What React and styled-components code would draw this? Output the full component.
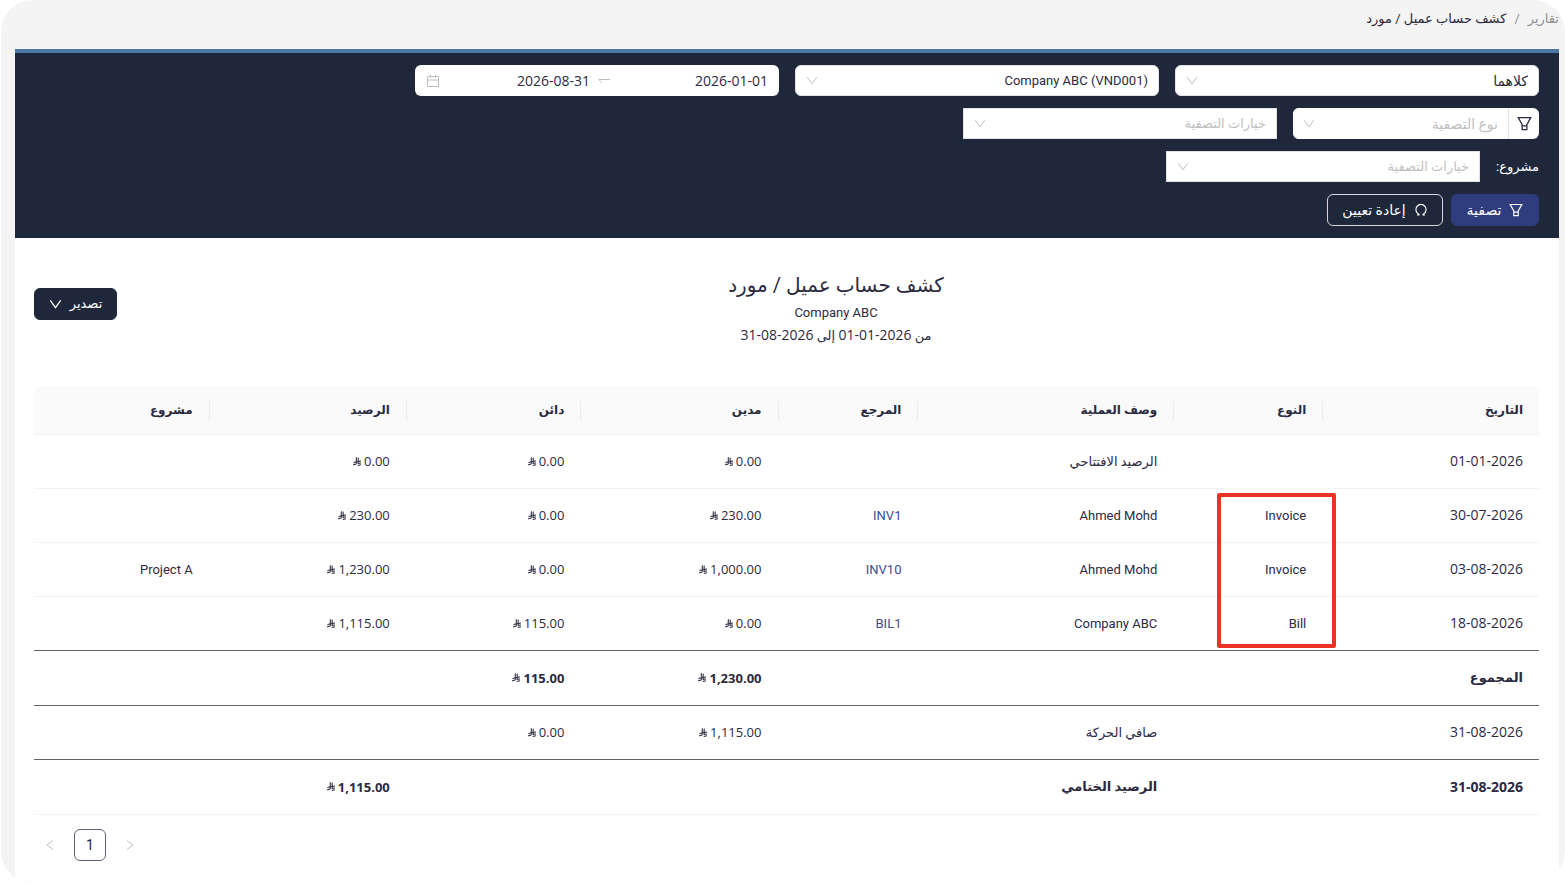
import React from 'react';
import styled, { createGlobalStyle } from 'styled-components';

const ink = '#2c2a3f';
const navy = '#1e283a';
const muted = '#bfbfbf';

const GlobalStyle = createGlobalStyle`
  *, *::before, *::after { box-sizing: border-box; }
  body { margin: 0; background: #fff; }
  body, button, input, select {
    font-family: Roboto, 'DejaVu Sans', sans-serif;
    font-size: 14px;
    line-height: 22px;
    color: ${ink};
  }
`;

const Frame = styled.div`
  min-height: 100vh;
  margin-left: 1px;
  padding: 8px 6px 0 14px;
  background: #f4f4f4;
  border-radius: 32px;
  overflow: hidden;
`;

const Breadcrumb = styled.nav`
  display: flex;
  gap: 8px;
  height: 41px;
  font-size: 13px;
  color: #8f8f95;
  a { color: inherit; text-decoration: none; }
`;

const Current = styled.span`
  color: ${ink};
`;

const Card = styled.main`
  min-height: calc(100vh - 49px);
  background: #fff;
`;

const FilterPanel = styled.form`
  display: flex;
  flex-direction: column;
  gap: 12px;
  padding: 12px 20px;
  background: ${navy};
  border-top: 4px solid #4a78a3;
`;

const FilterGrid = styled.div`
  display: grid;
  grid-template-columns: repeat(4, minmax(0, 1fr));
  gap: 16px;
`;

const FilterRow = styled.div`
  display: flex;
  align-items: center;
  gap: ${(p) => p.$gap || 16}px;
`;

const SelectBox = styled.div`
  display: flex;
  align-items: center;
  position: relative;
  flex: ${(p) => (p.$width ? `0 1 ${p.$width}px` : '1 1 auto')};
  height: 31px;
  background: #fff;
  border: 1px solid #e3e3e6;
  border-radius: ${(p) => (p.$square ? 0 : 6)}px;
  svg { position: absolute; left: 10px; color: ${muted}; pointer-events: none; }
`;

const NativeSelect = styled.select`
  appearance: none;
  width: 100%;
  height: 100%;
  padding: 0 10px 0 30px;
  border: 0;
  background: transparent;
  font-size: ${(p) => (p.$compact ? 13 : 14)}px;
  color: ${(p) => (p.$empty ? muted : ink)};
`;

const FilterTypeGroup = styled.div`
  display: flex;
  flex: 0 1 246px;
  background: #fff;
  border-radius: 6px;
  overflow: hidden;
  ${SelectBox} { border-width: 0 1px 0 0; border-radius: 0; }
`;

const Addon = styled.span`
  display: flex;
  align-items: center;
  justify-content: center;
  flex: 0 0 30px;
`;

const DateRange = styled.div`
  display: flex;
  align-items: center;
  height: 31px;
  padding: 0 11px;
  background: #fff;
  border-radius: 6px;
  color: ${muted};
`;

const RangeArrow = styled.span`
  display: flex;
  padding: 0 8px;
`;

const DateInput = styled.input`
  flex: 1 1 0;
  min-width: 0;
  padding: 0;
  border: 0;
  background: transparent;
  font-family: 'Open Sans', sans-serif;
  text-align: right;
  outline: none;
`;

const DateText = styled.bdi`
  font-family: 'Open Sans', sans-serif;
  font-size: 14px;
`;

const FieldLabel = styled.label`
  flex: 0 0 42px;
  white-space: nowrap;
  font-size: 13px;
  color: #fff;
`;

const Button = styled.button`
  display: inline-flex;
  align-items: center;
  justify-content: center;
  gap: 8px;
  min-width: ${(p) => p.$width}px;
  height: 32px;
  padding: 0 10px;
  white-space: nowrap;
  font-size: ${(p) => (p.$compact ? 13 : 14)}px;
  color: #fff;
  background: ${(p) => p.$fill || 'transparent'};
  border: 1px solid ${(p) => p.$line || p.$fill};
  border-radius: 6px;
  cursor: pointer;
`;

const Report = styled.section`
  padding: 33px 20px 16px 19px;
`;

const ReportHead = styled.header`
  display: flex;
  align-items: flex-start;
  gap: 16px;
  margin-bottom: 39px;
  ${Button} { margin-top: 17px; }
`;

const Heading = styled.div`
  flex: 1;
  display: flex;
  flex-direction: column;
  text-align: center;
  h1 { margin: 0 0 3px; font-size: 20px; line-height: 28px; font-weight: 400; }
  p { margin: 0; font-size: 13px; line-height: 22px; }
`;

const Ledger = styled.table`
  width: 100%;
  table-layout: fixed;
  border-collapse: separate;
  border-spacing: 0;
`;

const HeadCell = styled.th`
  position: relative;
  width: ${(p) => p.$width}%;
  height: 49px;
  padding: 0 16px;
  text-align: right;
  font-size: 12px;
  font-weight: 700;
  background: #fafafa;
  border-bottom: 1px solid #f2f2f2;
  &:first-child { border-top-right-radius: 8px; }
  &:last-child { border-top-left-radius: 8px; }
  &:not(:last-child)::after {
    content: '';
    position: absolute;
    left: 0;
    top: 15px;
    width: 1px;
    height: 20px;
    background: #ececec;
  }
`;

const Cell = styled.td`
  position: relative;
  padding: 0 16px;
  text-align: right;
  font-size: 13px;
  a { color: #3d4d8a; text-decoration: none; }
`;

const Row = styled.tr`
  height: ${(p) => (p.$bold ? 55 : 54)}px;
  font-weight: ${(p) => (p.$bold ? 700 : 400)};
  ${Cell} { border-bottom: 1px solid ${(p) => (p.$ruled ? '#63636b' : '#f2f2f2')}; }
`;

const Highlight = styled.div`
  position: absolute;
  top: 4px;
  left: 44px;
  right: -14px;
  height: 155px;
  border: 4px solid #ea3323;
  border-radius: 2px;
  pointer-events: none;
  z-index: 1;
`;

const Money = styled.span`
  display: inline-flex;
  align-items: center;
  gap: 3px;
  direction: ltr;
  font-family: 'Open Sans', sans-serif;
`;

const Pager = styled.nav`
  display: flex;
  direction: ltr;
  gap: 8px;
  margin-top: 14px;
`;

const PageButton = styled.button`
  display: flex;
  align-items: center;
  justify-content: center;
  width: 32px;
  height: 32px;
  padding: 0;
  background: transparent;
  color: ${(p) => (p.$active ? navy : muted)};
  border: 1px solid ${(p) => (p.$active ? '#5b6371' : 'transparent')};
  border-radius: 6px;
`;

const Stroke = ({ size = 12, children, box = 12, width = 1 }) => (
  <svg width={size} height={size} viewBox={`0 0 ${box} ${box}`} fill="none" stroke="currentColor" strokeWidth={width} aria-hidden="true">
    {children}
  </svg>
);

const Chevron = ({ width, size }) => <Stroke width={width} size={size}><path d="M1.2 2.2 6 8.8l4.8-6.6" /></Stroke>;
const Funnel = ({ size = 14 }) => (
  <Stroke size={size} box={14} width={1.2}>
    <path d="M1.2 1.5h11.6L9.2 8v4.7H4.8V8zM4.8 9.2h4.4" />
  </Stroke>
);
const Reload = () => (
  <Stroke size={14} box={14} width={1.2}>
    <path d="M3 12h1.9v-.8A5.1 5.1 0 1 1 9.1 11.2V12H11" />
  </Stroke>
);
const Calendar = () => (
  <Stroke size={14} box={14}>
    <path d="M1.5 2.5h11v10h-11zM1.5 6h11M4.5 .8v3M9.5 .8v3" />
  </Stroke>
);
const Swap = () => (
  <Stroke size={12}><path d="M12 4.5H.8l3 3.5" /></Stroke>
);
const Riyal = () => (
  <svg width="8" height="9" viewBox="0 0 1124.14 1256.39" fill="currentColor" stroke="currentColor" strokeWidth="20" role="img" aria-label="SAR">
    <path d="M699.62,1113.02h0c-20.06,44.48-33.32,92.75-38.4,143.37l424.51-90.24c20.06-44.47,33.31-92.75,38.4-143.37l-424.51,90.24Z" />
    <path d="M1085.73,895.8c20.06-44.47,33.32-92.75,38.4-143.37l-330.68,70.33v-135.2l292.27-62.11c20.06-44.47,33.32-92.75,38.4-143.37l-330.68,70.27V66.13c-50.67,28.45-95.67,66.32-132.25,110.99v403.35l-132.25,28.11V0c-50.67,28.44-95.67,66.32-132.25,110.99v525.69l-295.91,62.88c-20.06,44.47-33.33,92.75-38.42,143.37l334.33-71.05v170.26l-358.3,76.14c-20.06,44.47-33.32,92.75-38.4,143.37l375.04-79.7c30.53-6.35,56.77-24.4,73.83-49.24l68.78-101.97v-.02c7.14-10.55,11.3-23.27,11.3-36.97v-149.98l132.25-28.11v270.4l424.53-90.28Z" />
  </svg>
);

const Picker = ({ text, id, empty, compact, ...box }) => (
  <SelectBox {...box}>
    <NativeSelect id={id} aria-label={id ? undefined : text} $empty={empty} $compact={compact}>
      <option>{text}</option>
    </NativeSelect>
    <Chevron />
  </SelectBox>
);

const columns = [
  ['التاريخ', 14.4], ['النوع', 9.9], ['وصف العملية', 17], ['المرجع', 9.3],
  ['مدين', 13.1], ['دائن', 11.6], ['الرصيد', 13.1], ['مشروع', 11.6],
];

const rows = [
  { date: '01-01-2026', text: 'الرصيد الافتتاحي', debit: '0.00', credit: '0.00', balance: '0.00' },
  { date: '30-07-2026', type: 'Invoice', text: 'Ahmed Mohd', ref: 'INV1', debit: '230.00', credit: '0.00', balance: '230.00', marked: true },
  { date: '03-08-2026', type: 'Invoice', text: 'Ahmed Mohd', ref: 'INV10', debit: '1,000.00', credit: '0.00', balance: '1,230.00', project: 'Project A' },
  { date: '18-08-2026', type: 'Bill', text: 'Company ABC', ref: 'BIL1', debit: '0.00', credit: '115.00', balance: '1,115.00', ruled: true },
  { label: 'المجموع', debit: '1,230.00', credit: '115.00', bold: true, ruled: true },
  { date: '31-08-2026', text: 'صافي الحركة', debit: '1,115.00', credit: '0.00', ruled: true },
  { date: '31-08-2026', text: 'الرصيد الختامي', balance: '1,115.00', bold: true },
];

const Amount = ({ value }) => (value ? <Money><Riyal />{value}</Money> : null);

export default function App() {
  return (
    <Frame dir="rtl" lang="ar">
      <GlobalStyle />
      <Breadcrumb aria-label="مسار التنقل">
        <a href="#reports">تقارير</a>
        <span>/</span>
        <Current>كشف حساب عميل / مورد</Current>
      </Breadcrumb>
      <Card>
        <FilterPanel>
          <FilterGrid>
            <Picker text="كلاهما" />
            <Picker text="Company ABC (VND001)" compact />
            <DateRange>
              <DateInput dir="ltr" aria-label="من" defaultValue="2026-01-01" />
              <RangeArrow><Swap /></RangeArrow>
              <DateInput dir="ltr" aria-label="إلى" defaultValue="2026-08-31" />
              <Calendar />
            </DateRange>
          </FilterGrid>
          <FilterRow>
            <FilterTypeGroup>
              <Addon><Funnel size={15} /></Addon>
              <Picker text="نوع التصفية" empty />
            </FilterTypeGroup>
            <Picker text="خيارات التصفية" empty compact $square $width={314} />
          </FilterRow>
          <FilterRow>
            <FieldLabel htmlFor="project">مشروع:</FieldLabel>
            <Picker id="project" text="خيارات التصفية" empty compact $square $width={314} />
          </FilterRow>
          <FilterRow $gap={8}>
            <Button type="button" $width={88} $fill="#2f3d7e"><Funnel />تصفية</Button>
            <Button type="button" $width={116} $line="#d5d7dc"><Reload />إعادة تعيين</Button>
          </FilterRow>
        </FilterPanel>
        <Report>
          <ReportHead>
            <Heading>
              <h1>كشف حساب عميل / مورد</h1>
              <p>Company ABC</p>
              <p>من <DateText dir="ltr">01-01-2026</DateText> إلى <DateText dir="ltr">31-08-2026</DateText></p>
            </Heading>
            <Button type="button" $compact $width={83} $fill={navy}>تصدير<Chevron width={1.2} size={13} /></Button>
          </ReportHead>
          <Ledger>
            <thead>
              <tr>{columns.map(([name, width]) => <HeadCell key={name} scope="col" $width={width}>{name}</HeadCell>)}</tr>
            </thead>
            <tbody>
              {rows.map((r, i) => (
                <Row key={i} $bold={r.bold} $ruled={r.ruled}>
                  <Cell>{r.label || <DateText dir="ltr">{r.date}</DateText>}</Cell>
                  <Cell>{r.type}{r.marked && <Highlight />}</Cell>
                  <Cell>{r.text}</Cell>
                  <Cell>{r.ref && <a href={`#${r.ref}`}>{r.ref}</a>}</Cell>
                  <Cell><Amount value={r.debit} /></Cell>
                  <Cell><Amount value={r.credit} /></Cell>
                  <Cell><Amount value={r.balance} /></Cell>
                  <Cell>{r.project}</Cell>
                </Row>
              ))}
            </tbody>
          </Ledger>
          <Pager aria-label="الصفحات">
            <PageButton type="button" aria-label="الصفحة التالية"><Stroke><path d="M9 1.5 3 6l6 4.5" /></Stroke></PageButton>
            <PageButton type="button" $active>1</PageButton>
            <PageButton type="button" aria-label="الصفحة السابقة"><Stroke><path d="M3 1.5 9 6l-6 4.5" /></Stroke></PageButton>
          </Pager>
        </Report>
      </Card>
    </Frame>
  );
}
